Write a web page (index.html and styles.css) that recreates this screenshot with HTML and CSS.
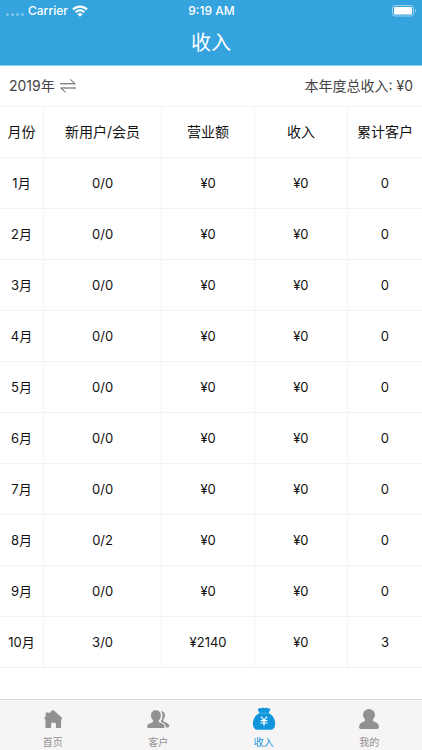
FILE: index.html
```html
<!DOCTYPE html>
<html lang="zh-CN">
<head>
  <title>收入</title>
  <meta charset="UTF-8" />
  <meta name="viewport" content="width=device-width, initial-scale=1.0" />
  <link rel="stylesheet" href="styles.css">
</head>
<body>
  <header class="header">
    <div class="status-bar">
      <div class="carrier">
        <span class="signal"><i></i><i></i><i></i><i></i></span>
        <span>Carrier</span>
        <svg class="wifi" viewBox="0 0 16 12" width="16" height="12">
          <path d="M1 4.4a10 10 0 0 1 14 0" fill="none" stroke="#fff" stroke-width="2.2" />
          <path d="M3.6 7.2a6.2 6.2 0 0 1 8.8 0" fill="none" stroke="#fff" stroke-width="2" />
          <path d="M8 11.8L5.4 9.2a3.7 3.7 0 0 1 5.2 0z" fill="#fff" />
        </svg>
      </div>
      <div class="time">9:19 AM</div>
      <div class="battery">
        <svg viewBox="0 0 25 12" width="25" height="12">
          <rect x="0.5" y="0.5" width="21" height="10.5" rx="2.5" fill="none" stroke="#9dd2f1" />
          <rect x="2" y="2" width="18" height="7.5" rx="1" fill="#fff" />
          <path d="M23 4v3.6q1.4-.6 1.4-1.8T23 4z" fill="#9dd2f1" />
        </svg>
      </div>
    </div>
    <h1 class="title">收入</h1>
  </header>

  <main class="content">
    <div class="summary">
      <button class="year-btn" type="button">
        2019年
        <svg viewBox="0 0 16 14" width="16" height="14" fill="none" stroke="#555" stroke-width="1">
          <path d="M0 4.8h15.2L10.4 0.4" />
          <path d="M16 9H0.8l4.8 4.4" />
        </svg>
      </button>
      <span>本年度总收入: ¥0</span>
    </div>

    <table class="income">
      <colgroup>
        <col class="col-month"><col class="col-users"><col class="col-sales"><col class="col-income"><col class="col-total">
      </colgroup>
      <thead>
        <tr><th>月份</th><th>新用户/会员</th><th>营业额</th><th>收入</th><th>累计客户</th></tr>
      </thead>
      <tbody>
        <tr><td>1月</td><td>0/0</td><td>¥0</td><td>¥0</td><td>0</td></tr>
        <tr><td>2月</td><td>0/0</td><td>¥0</td><td>¥0</td><td>0</td></tr>
        <tr><td>3月</td><td>0/0</td><td>¥0</td><td>¥0</td><td>0</td></tr>
        <tr><td>4月</td><td>0/0</td><td>¥0</td><td>¥0</td><td>0</td></tr>
        <tr><td>5月</td><td>0/0</td><td>¥0</td><td>¥0</td><td>0</td></tr>
        <tr><td>6月</td><td>0/0</td><td>¥0</td><td>¥0</td><td>0</td></tr>
        <tr><td>7月</td><td>0/0</td><td>¥0</td><td>¥0</td><td>0</td></tr>
        <tr><td>8月</td><td>0/2</td><td>¥0</td><td>¥0</td><td>0</td></tr>
        <tr><td>9月</td><td>0/0</td><td>¥0</td><td>¥0</td><td>0</td></tr>
        <tr><td>10月</td><td>3/0</td><td>¥2140</td><td>¥0</td><td>3</td></tr>
      </tbody>
    </table>
  </main>

  <nav class="tab-bar">
    <a class="tab" href="#home">
      <svg viewBox="0 0 24 24" width="24" height="24" fill="currentColor">
        <path d="M11.300 3.300q.7-.6 1.400 0l8 7.200q.6.600.4 1.200-.3.500-1 .5V19.800q0 1.200-1.200 1.200h-4v-4.300q0-1-1-1h-2.800q-1 0-1 1V21H5.600q-1.200 0-1.200-1.200v-7.600q-.8 0-1.100-.5-.2-.6.4-1.200L4.800 9.200V6q0-.6.6-.6h1.800q.6 0 .6.500v.6z" />
      </svg>
      <span>首页</span>
    </a>
    <a class="tab" href="#customers">
      <svg viewBox="0 0 24 24" width="24" height="24" fill="currentColor">
        <path d="M10 3.200c3 0 4.900 2 4.900 5 0 2.200-.8 3.900-2 5-.5 1.300 0 2 1.300 2.500 3 .8 4.400 2 4.400 3.800 0 1-.6 1.500-1.600 1.500H2.800c-1 0-1.600-.5-1.600-1.500 0-1.800 1.400-3 4.400-3.800 1.400-.5 1.900-1.200 1.400-2.500-1.200-1.100-2-2.800-2-5 0-3 2-5 5-5z" />
        <path d="M14.800 3.900c2.700.2 4.200 1.900 4.200 4.400 0 1.900-.7 3.300-1.700 4.300-.3 1.200.1 1.900 1.400 2.400 2.900.9 4.500 2.200 4.500 4 0 1-.5 1.400-1.500 1.400h-1.800c.1-2.600-1.400-4.200-4.500-5.200-.7-.3-.8-.8-.4-1.600 2-2.600 2.300-7.200-.2-9.700z" />
      </svg>
      <span>客户</span>
    </a>
    <a class="tab active" href="#income" aria-current="page">
      <svg viewBox="0 0 24 24" width="24" height="24">
        <path fill="currentColor" d="M6.700 1.500c1-.7 2 .1 2.900-.4 1-.6 1.700-.6 2.500-.1.800.5 1.500-.4 2.600-.2 1 .2 1.400.9 2.500.7 1.100 0 1.400 1 .8 1.900L16.500 6c4 1.700 6.700 6 6.700 10.500 0 4-1.600 6.300-5 6.300H6.100c-3.500 0-5.200-2.300-5.200-6.300C.9 12 3.600 7.700 7.600 6L6.100 3.400c-.5-.8-.2-1.500.6-1.900z" />
        <path d="M8.200 6.300h7.700" stroke="#6bbce9" stroke-width="0.6" />
        <path d="M9 9.600l3 3.800 3-3.800M8.600 13.600h6.800M8.600 16h6.800M12 13.400v5.400" fill="none" stroke="#fff" stroke-width="1.200" />
      </svg>
      <span>收入</span>
    </a>
    <a class="tab" href="#mine">
      <svg viewBox="0 0 24 24" width="24" height="24" fill="currentColor">
        <circle cx="12" cy="8" r="6" />
        <path d="M8.300 11.500h7.400q-.2 2.200 1.200 2.900c3.500 1 5.100 3 5.100 5.800q0 1.800-1.800 1.800H3.800Q2 22 2 20.200c0-2.800 1.600-4.800 5.100-5.800q1.400-.7 1.200-2.900z" />
      </svg>
      <span>我的</span>
    </a>
  </nav>
</body>
</html>
```

FILE: styles.css
```css
:root {
  --blue: #34a3de;
  --active: #1296db;
  --line: #f3f3f3;
  --grey: #929092;
}

* {
  box-sizing: border-box;
}

body {
  margin: 0;
  min-height: 100vh;
  display: flex;
  flex-direction: column;
  font-family: Inter, "Noto Sans CJK SC", sans-serif;
  font-size: 14px;
  line-height: 20px;
  color: #111;
  background: #fff;
}

.header {
  background: var(--blue);
  color: #fff;
  border-bottom: 1px solid #8ccbed;
}

.status-bar {
  display: grid;
  grid-template-columns: 1fr auto 1fr;
  align-items: center;
  height: 21px;
  padding: 0 5px 0 6px;
  font-size: 12px;
  font-weight: 500;
}

.carrier {
  display: flex;
  align-items: center;
  gap: 4px;
}

.signal {
  display: flex;
  gap: 2px;
  padding-top: 8px;
}

.signal i {
  width: 3px;
  height: 3px;
  border-radius: 50%;
  background: #80c5eb;
}

.battery {
  display: flex;
  justify-content: flex-end;
}

.title {
  margin: 0;
  height: 44px;
  font-size: 20px;
  font-weight: 400;
  line-height: 44px;
  text-align: center;
}

.content {
  flex: 1;
}

.summary {
  display: flex;
  justify-content: space-between;
  align-items: center;
  height: 40px;
  padding: 0 9px;
  color: #444;
}

.year-btn {
  display: flex;
  align-items: center;
  gap: 5px;
  padding: 0;
  border: none;
  background: none;
  font: inherit;
  color: inherit;
  cursor: pointer;
}

.income {
  width: 100%;
  table-layout: fixed;
  border-collapse: separate;
  border-spacing: 0;
  border-top: 1px solid var(--line);
}

.col-month { width: 44px; }
.col-users { width: 28%; }
.col-sales { width: 22%; }
.col-income { width: 22%; }

.income th,
.income td {
  height: 51px;
  padding: 0;
  font-weight: 400;
  text-align: center;
  border-right: 1px solid var(--line);
  border-bottom: 1px solid var(--line);
}

.income td {
  font-size: 13px;
}

.income th:last-child,
.income td:last-child {
  border-right: none;
}

.tab-bar {
  position: sticky;
  bottom: 0;
  display: flex;
  height: 51px;
  background: #f6f4f5;
  border-top: 1px solid #d8d7d8;
}

.tab {
  flex: 1;
  display: flex;
  flex-direction: column;
  align-items: center;
  padding-top: 7px;
  gap: 4px;
  color: var(--grey);
  font-size: 10px;
  line-height: 15px;
  text-decoration: none;
}

.tab.active {
  color: var(--active);
}
```
